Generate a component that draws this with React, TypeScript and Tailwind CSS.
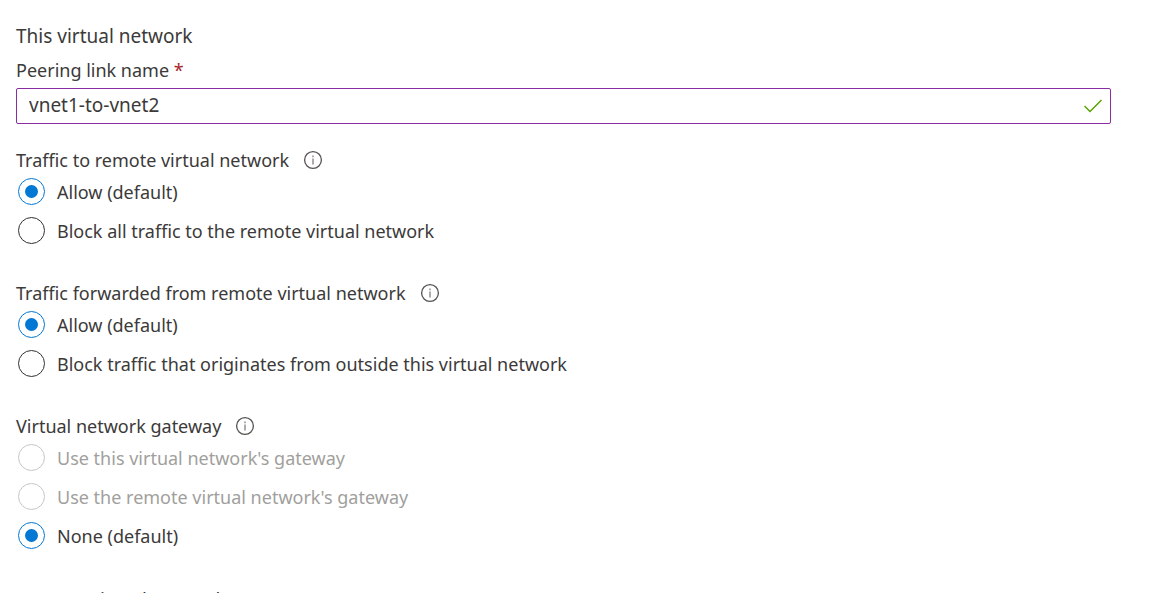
import { useId, useState } from 'react';

type Option = { label: string; disabled?: boolean };

function InfoIcon() {
  return (
    <svg viewBox="0 0 20 20" className="size-5" fill="none" aria-hidden="true">
      <circle cx="10" cy="10" r="8.4" stroke="#55534f" strokeWidth="1.3" />
      <path d="M10 8.6V14.4" stroke="#8a8886" strokeWidth="1.4" />
      <path d="M10 5.6V7.2" stroke="#8a8886" strokeWidth="1.4" />
    </svg>
  );
}

function RadioSection({ title, options, initial }: { title: string; options: Option[]; initial: number }) {
  const name = useId();
  const [selected, setSelected] = useState(initial);
  return (
    <div role="radiogroup" aria-labelledby={name + 'title'} className="mb-[37px]">
      <div className="flex h-6 items-center gap-3.5">
        <span id={name + 'title'}>{title}</span>
        <button type="button" aria-label={'About ' + title}>
          <InfoIcon />
        </button>
      </div>
      <div className="mt-1.5 ml-0.5 flex flex-col items-start gap-3">
        {options.map((option, index) => (
          <label
            key={option.label}
            className="flex h-[27px] items-center gap-3 has-[:disabled]:text-[#a19f9d]"
          >
            <input
              type="radio"
              name={name}
              checked={selected === index}
              disabled={option.disabled}
              onChange={() => setSelected(index)}
              className="grid size-[27px] shrink-0 appearance-none place-items-center rounded-full border border-[#323130] bg-white before:size-[13px] before:rounded-full checked:border-[#0078d4] checked:before:bg-[#0078d4] disabled:border-[#c8c6c4]"
            />
            <span>{option.label}</span>
          </label>
        ))}
      </div>
    </div>
  );
}

export default function App() {
  const [linkName, setLinkName] = useState('vnet1-to-vnet2');
  return (
    <main className="h-screen overflow-hidden bg-white pt-6 pr-[45px] pl-4 font-['Noto_Sans','Open_Sans',sans-serif] text-[18px] leading-6 text-[#3b3a39]">
      <h2 className="text-[19px]">This virtual network</h2>
      <label htmlFor="link-name" className="mt-2.5 block">
        Peering link name <span className="text-[#a4262c]">*</span>
      </label>
      <div className="mt-1.5 mb-6 flex h-9 items-center rounded-xs border border-[#8a2da5] pr-2 pl-3">
        <input
          id="link-name"
          required
          value={linkName}
          onChange={(event) => setLinkName(event.target.value)}
          className="min-w-0 flex-1 pb-0.5 text-[19px] outline-none"
        />
        <svg viewBox="0 0 18 14" className="h-3.5 w-[18px]" fill="none" aria-hidden="true">
          <path d="M0.5 7L6 12.5L17.5 1" stroke="#57a300" strokeWidth="1.5" />
        </svg>
      </div>
      <RadioSection
        title="Traffic to remote virtual network"
        initial={0}
        options={[{ label: 'Allow (default)' }, { label: 'Block all traffic to the remote virtual network' }]}
      />
      <RadioSection
        title="Traffic forwarded from remote virtual network"
        initial={0}
        options={[{ label: 'Allow (default)' }, { label: 'Block traffic that originates from outside this virtual network' }]}
      />
      <RadioSection
        title="Virtual network gateway"
        initial={2}
        options={[
          { label: "Use this virtual network's gateway", disabled: true },
          { label: "Use the remote virtual network's gateway", disabled: true },
          { label: 'None (default)' },
        ]}
      />
      <h2 className="pt-0.5 text-[19px]">Remote virtual network</h2>
    </main>
  );
}
